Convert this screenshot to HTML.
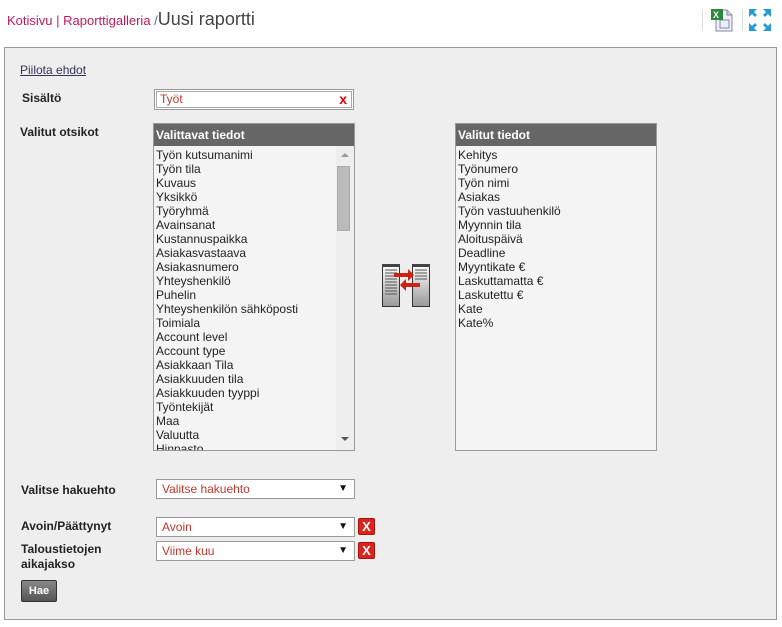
<!DOCTYPE html>
<html><head><meta charset="utf-8"><style>
*{margin:0;padding:0;box-sizing:border-box}
body{width:782px;height:627px;background:#fff;font-family:"Liberation Sans",Arial,sans-serif;font-size:12px;color:#333;position:relative;overflow:hidden}
.a{position:absolute}
.crumb{left:7px;top:9px;font-size:13px;color:#c2185b;white-space:nowrap}
.crumb .t{font-size:18px;color:#444}
.panel{left:4px;top:47px;width:773px;height:573px;background:#eee;border:1px solid #999}
.lbl{font-weight:bold;color:#222;font-size:12px}
.box{background:#f4f4f4;border:1px solid #999;overflow:hidden}
.hd{background:#666;color:#fff;font-weight:bold;height:22px;line-height:22px;padding-left:2px}
.items div{height:14px;line-height:14px;padding-left:2px;font-size:12px;color:#222;white-space:nowrap}
.sel{background:#fff;border:1px solid #999;color:#c0392b;height:20px;line-height:18px;padding-left:5px}
.sel:after{content:"\25BC";position:absolute;right:6px;top:0;font-size:10px;color:#111}
.x{width:17px;height:17px;background:#d9251d;border:1px solid #a11;color:#fff;font-weight:bold;font-size:13px;line-height:15px;text-align:center;border-radius:2px}
</style></head><body>
<div class="a crumb">Kotisivu | Raporttigalleria <span style="color:#666">/</span><span class="t">Uusi raportti</span></div>
<div class="a" style="left:702px;top:10px;width:1px;height:20px;background:#ddd"></div>
<div class="a" style="left:742px;top:10px;width:1px;height:20px;background:#ddd"></div>
<svg class="a" style="left:711px;top:8px" width="22" height="24"><path d="M5 2h11l5 5v16H5z" fill="#eef" stroke="#889"/><path d="M16 2v5h5" fill="#ccd" stroke="#889"/><rect x="9" y="12" width="9" height="8" fill="none" stroke="#88a"/><rect x="0" y="1" width="12" height="11" fill="#2a8a3a"/><text x="2" y="10" font-size="9" fill="#fff" font-family="Liberation Sans" font-weight="bold">X</text></svg>
<svg class="a" style="left:749px;top:9px" width="22" height="22" fill="#2a9ad6"><path d="M0 0h8l-3 3 3 3-2 2-3-3-3 3z"/><path d="M22 0h-8l3 3-3 3 2 2 3-3 3 3z"/><path d="M0 22h8l-3-3 3-3-2-2-3 3-3-3z"/><path d="M22 22h-8l3-3-3-3 2-2 3 3 3-3z"/></svg>
<div class="a panel"></div>
<div class="a" style="left:20px;top:63px;color:#335;text-decoration:underline;font-size:12px">Piilota ehdot</div>
<div class="a lbl" style="left:22px;top:91px">Sisältö</div>
<div class="a" style="left:154px;top:89px;width:200px;height:21px;border:1px solid #999;background:#fff;padding:1px"><div style="border:1px solid #aaa;height:17px;color:#c0392b;padding-left:3px;line-height:15px">Työt<span style="position:absolute;right:6px;top:2px;color:#d00;font-weight:bold;font-size:14px">x</span></div></div>
<div class="a lbl" style="left:20px;top:125px">Valitut otsikot</div>
<div class="a box" style="left:153px;top:123px;width:202px;height:328px">
<div class="hd">Valittavat tiedot</div>
<div class="items" style="padding-top:2px">
<div>Työn kutsumanimi</div><div>Työn tila</div><div>Kuvaus</div><div>Yksikkö</div><div>Työryhmä</div><div>Avainsanat</div><div>Kustannuspaikka</div><div>Asiakasvastaava</div><div>Asiakasnumero</div><div>Yhteyshenkilö</div><div>Puhelin</div><div>Yhteyshenkilön sähköposti</div><div>Toimiala</div><div>Account level</div><div>Account type</div><div>Asiakkaan Tila</div><div>Asiakkuuden tila</div><div>Asiakkuuden tyyppi</div><div>Työntekijät</div><div>Maa</div><div>Valuutta</div><div>Hinnasto</div>
</div>
<div class="a" style="left:182px;top:22px;width:18px;height:304px;background:#eee"></div>
<div class="a" style="left:187px;top:29px;width:0;height:0;border:4px solid transparent;border-bottom:4px solid #999;border-top:0"></div>
<div class="a" style="left:183px;top:42px;width:13px;height:65px;background:#bbb;border:1px solid #aaa"></div>
<div class="a" style="left:187px;top:313px;width:0;height:0;border:4px solid transparent;border-top:4px solid #555;border-bottom:0"></div>
</div>
<div class="a box" style="left:455px;top:123px;width:202px;height:328px">
<div class="hd">Valitut tiedot</div>
<div class="items" style="padding-top:2px">
<div>Kehitys</div><div>Työnumero</div><div>Työn nimi</div><div>Asiakas</div><div>Työn vastuuhenkilö</div><div>Myynnin tila</div><div>Aloituspäivä</div><div>Deadline</div><div>Myyntikate €</div><div>Laskuttamatta €</div><div>Laskutettu €</div><div>Kate</div><div>Kate%</div>
</div></div>
<svg class="a" style="left:382px;top:264px" width="48" height="44">
<defs><linearGradient id="g" x1="0" y1="0" x2="0" y2="1"><stop offset="0" stop-color="#fff"/><stop offset="1" stop-color="#999"/></linearGradient></defs>
<rect x="0.5" y="0.5" width="17" height="42" fill="url(#g)" stroke="#333"/><rect x="0" y="0" width="18" height="3" fill="#444"/>
<rect x="30.5" y="0.5" width="17" height="42" fill="url(#g)" stroke="#333"/><rect x="30" y="0" width="18" height="3" fill="#444"/>
<g stroke="#555"><path d="M3 6h12M3 9h12M3 12h12M3 15h12M3 18h12M3 21h12M3 24h12M3 27h12M3 30h12"/><path d="M33 6h12M33 9h12M33 12h12M33 15h12"/></g>
<path d="M12 9h14v-4l6 6-6 6v-4H12z" fill="#c21"/><path d="M38 19H24v-4l-6 6 6 6v-4h14z" fill="#c21"/>
</svg>
<div class="a lbl" style="left:21px;top:483px">Valitse hakuehto</div>
<div class="a sel" style="left:156px;top:479px;width:199px">Valitse hakuehto</div>
<div class="a lbl" style="left:21px;top:519px">Avoin/Päättynyt</div>
<div class="a sel" style="left:156px;top:517px;width:199px">Avoin</div>
<div class="a x" style="left:358px;top:518px">X</div>
<div class="a lbl" style="left:21px;top:542px;line-height:15px">Taloustietojen<br>aikajakso</div>
<div class="a sel" style="left:156px;top:541px;width:199px">Viime kuu</div>
<div class="a x" style="left:358px;top:542px">X</div>
<div class="a" style="left:21px;top:580px;width:36px;height:22px;background:linear-gradient(#888,#555);border:1px solid #333;border-radius:2px;color:#fff;font-weight:bold;font-size:11px;text-align:center;line-height:20px">Hae</div>
</body></html>
